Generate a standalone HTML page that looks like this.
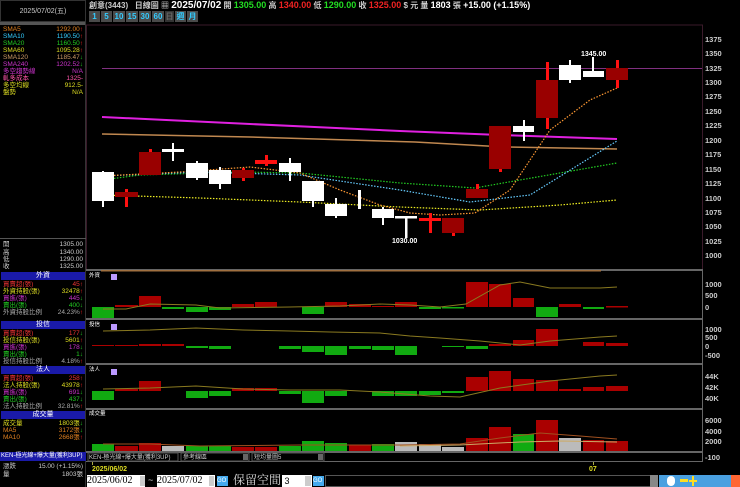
<!DOCTYPE html>
<html><head><meta charset="utf-8"><style>
*{margin:0;padding:0;box-sizing:border-box}
body{width:740px;height:487px;background:#000;overflow:hidden;position:relative;font-family:"Liberation Sans","Noto Sans CJK TC",sans-serif;color:#ccc}
.a{position:absolute;white-space:nowrap}
.r{position:absolute;left:3px;width:82px;height:7px;font-size:6.5px;line-height:7px}
.r span{position:absolute;right:2px}
.h{position:absolute;left:1px;width:84px;height:8px;background:#1a1aa8;color:#fff;font-size:7px;line-height:8px;text-align:center}
.btn{position:absolute;top:11px;height:11px;background:#4a4a4a;color:#3cf;font-size:8px;line-height:11px;text-align:center;font-weight:bold}
</style></head><body>
<!-- left panel -->
<div class="a" style="left:0;top:0;width:86px;height:22px;border:1px solid #333;font-size:7px;color:#ccc;line-height:22px;text-align:center">2025/07/02(五)</div>
<div class="a" style="left:0;top:22px;width:86px;height:3px;background:#555"></div>
<div class="a" style="left:85px;top:22px;width:1px;height:465px;background:#333"></div>
<div class="r" style="top:26px;color:#e08020">SMA5<span>1292.00<b style="color:#f22">↑</b></span></div>
<div class="r" style="top:33px;color:#3cf">SMA10<span>1190.50<b style="color:#f22">↑</b></span></div>
<div class="r" style="top:40px;color:#2c2">SMA20<span>1160.50<b style="color:#f22">↑</b></span></div>
<div class="r" style="top:47px;color:#dd2">SMA60<span>1095.28<b style="color:#f22">↑</b></span></div>
<div class="r" style="top:54px;color:#c96">SMA120<span>1185.47<b style="color:#2c2">↓</b></span></div>
<div class="r" style="top:61px;color:#c3c">SMA240<span>1202.52<b style="color:#2c2">↓</b></span></div>
<div class="r" style="top:68px;color:#c3c">多空趨勢線<span>N/A</span></div>
<div class="r" style="top:75px;color:#f5a">軋多成本<span>1325-</span></div>
<div class="r" style="top:82px;color:#dd2">多空均線<span>912.5-</span></div>
<div class="r" style="top:89px;color:#dd2">盤勢<span>N/A</span></div>
<div class="a" style="left:0;top:238px;width:86px;height:1px;background:#555"></div>
<div class="r" style="top:241px">開<span>1305.00</span></div>
<div class="r" style="top:249px">高<span>1340.00</span></div>
<div class="r" style="top:256px">低<span>1290.00</span></div>
<div class="r" style="top:263px">收<span>1325.00</span></div>
<div class="h" style="top:272px">外資</div>
<div class="r" style="top:281px;color:#e33">買賣超(張)<span>45<b>↑</b></span></div>
<div class="r" style="top:288px;color:#dd2">外資持股(張)<span>32478<b style="color:#f22">↑</b></span></div>
<div class="r" style="top:295px;color:#c3c">買進(張)<span>445<b style="color:#2c2">↓</b></span></div>
<div class="r" style="top:302px;color:#2c2">賣出(張)<span>400<b>↓</b></span></div>
<div class="r" style="top:309px;color:#aaa">外資持股比例<span>24.23%<b style="color:#f22">↑</b></span></div>
<div class="h" style="top:321px">投信</div>
<div class="r" style="top:330px;color:#e33">買賣超(張)<span>177<b style="color:#2c2">↓</b></span></div>
<div class="r" style="top:337px;color:#dd2">投信持股(張)<span>5601<b style="color:#f22">↑</b></span></div>
<div class="r" style="top:344px;color:#c3c">買進(張)<span>178<b style="color:#2c2">↓</b></span></div>
<div class="r" style="top:351px;color:#2c2">賣出(張)<span>1<b>↓</b></span></div>
<div class="r" style="top:358px;color:#aaa">投信持股比例<span>4.18%<b style="color:#f22">↑</b></span></div>
<div class="h" style="top:366px">法人</div>
<div class="r" style="top:375px;color:#e33">買賣超(張)<span>258<b>↑</b></span></div>
<div class="r" style="top:382px;color:#dd2">法人持股(張)<span>43978<b style="color:#f22">↑</b></span></div>
<div class="r" style="top:389px;color:#c3c">買進(張)<span>691<b style="color:#2c2">↓</b></span></div>
<div class="r" style="top:396px;color:#2c2">賣出(張)<span>437<b>↓</b></span></div>
<div class="r" style="top:403px;color:#aaa">法人持股比例<span>32.81%<b style="color:#f22">↑</b></span></div>
<div class="h" style="top:411px">成交量</div>
<div class="r" style="top:420px;color:#dd2">成交量<span>1803張<b style="color:#2c2">↓</b></span></div>
<div class="r" style="top:427px;color:#e08020">MA5<span>3172張<b style="color:#2c2">↓</b></span></div>
<div class="r" style="top:434px;color:#e08020">MA10<span>2668張<b style="color:#f22">↑</b></span></div>
<div class="a" style="left:0;top:452px;width:86px;height:9px;background:#1a1aa8;color:#fff;font-size:6px;line-height:9px;padding-left:1px">KEN-極光線+爆大量(獲利3UP)</div>
<div class="r" style="top:463px">漲跌<span>15.00 (+1.15%)</span></div>
<div class="r" style="top:471px">量<span>1803張</span></div>

<!-- header -->
<div class="a" style="left:89px;top:0;font-size:8px;line-height:11px;font-weight:bold;color:#ccc">創意(3443) &nbsp; 日線圖 ▦ <span style="font-size:10px;color:#fff">2025/07/02</span> 開 <span style="color:#2d2;font-size:9px">1305.00</span> 高 <span style="color:#e22;font-size:9px">1340.00</span> 低 <span style="color:#2d2;font-size:9px">1290.00</span> 收 <span style="color:#e22;font-size:9px">1325.00</span> $ 元 量 <span style="color:#fff;font-size:9px">1803</span> 張 <span style="color:#fff;font-size:9px">+15.00 (+1.15%)</span></div>
<div class="btn" style="left:89px;width:11px">1</div>
<div class="btn" style="left:101px;width:11px">5</div>
<div class="btn" style="left:113px;width:12px">10</div>
<div class="btn" style="left:126px;width:12px">15</div>
<div class="btn" style="left:139px;width:12px">30</div>
<div class="btn" style="left:152px;width:12px">60</div>
<div class="btn" style="left:165px;width:9px;background:#333;color:#666">日</div>
<div class="btn" style="left:175px;width:11px">週</div>
<div class="btn" style="left:187px;width:11px">月</div>

<svg class="a" style="left:0;top:0" width="740" height="487" font-family="Liberation Sans" font-size="7.5" font-weight="bold">
<rect x="86.5" y="25" width="616" height="245" fill="none" stroke="#3a1a2a"/>
<g fill="#ccc">
<text x="705" y="42">1375</text><text x="705" y="56">1350</text><text x="705" y="71">1325</text><text x="705" y="85">1300</text><text x="705" y="99">1275</text><text x="705" y="114">1250</text><text x="705" y="128">1225</text><text x="705" y="143">1200</text><text x="705" y="157">1175</text><text x="705" y="172">1150</text><text x="705" y="186">1125</text><text x="705" y="201">1100</text><text x="705" y="215">1075</text><text x="705" y="229">1050</text><text x="705" y="244">1025</text><text x="705" y="258">1000</text>
</g>
<line x1="102" y1="68.5" x2="702" y2="68.5" stroke="#803080" stroke-width="1"/>
<polyline points="102,117 250,124 400,131 500,135 617,139" fill="none" stroke="#e020e0" stroke-width="2"/>
<polyline points="102,134 250,137 415,142 505,147 617,149" fill="none" stroke="#c08850" stroke-width="1.5"/>
<g fill="none" stroke-width="1.2" stroke-dasharray="1.5 1.5">
<polyline points="102,180 140,175 240,172 300,173 400,183 475,188 520,180 617,163" stroke="#2c2"/>
<polyline points="102,176 200,172 300,175 400,190 470,202 530,195 617,141" stroke="#6cf"/>
<polyline points="102,195 200,198 300,202 400,207 480,210 560,205 617,200" stroke="#ee2"/>
<polyline points="102,176 180,172 250,167 300,173 340,190 380,205 410,213 440,215 475,213 510,190 550,130 590,100 617,88" stroke="#f93"/>
</g>
<!-- candles -->
<g fill="#fff">
<rect x="102" y="171" width="2" height="36"/><rect x="92" y="172" width="22" height="29"/>
<rect x="172" y="143" width="2" height="18"/><rect x="162" y="149" width="22" height="3"/>
<rect x="196" y="161" width="2" height="19"/><rect x="186" y="163" width="22" height="15"/>
<rect x="219" y="167" width="2" height="22"/><rect x="209" y="170" width="22" height="14"/>
<rect x="289" y="158" width="2" height="23"/><rect x="279" y="163" width="22" height="9"/>
<rect x="312" y="181" width="2" height="26"/><rect x="302" y="181" width="22" height="20"/>
<rect x="335" y="198" width="2" height="20"/><rect x="325" y="204" width="22" height="12"/>
<rect x="358" y="190" width="3" height="19"/>
<rect x="382" y="207" width="2" height="18"/><rect x="372" y="209" width="22" height="9"/>
<rect x="405" y="216" width="2.5" height="22"/><rect x="395" y="216" width="22" height="2.5"/>
<rect x="523" y="120" width="2" height="21"/><rect x="513" y="126" width="21" height="6"/>
<rect x="569" y="60" width="2" height="23"/><rect x="559" y="65" width="22" height="15"/>
<rect x="592" y="57" width="2" height="17"/><rect x="583" y="71" width="21" height="6"/>
</g>
<g fill="#f11">
<rect x="125" y="189" width="3" height="18"/><rect x="149" y="149" width="3" height="5"/>
<rect x="265" y="155" width="3" height="11"/><rect x="242" y="168" width="3" height="13"/>
<rect x="429" y="213" width="3" height="20"/><rect x="452" y="230" width="3" height="6"/>
<rect x="476" y="184" width="3" height="6"/><rect x="499" y="165" width="3" height="7"/>
<rect x="546" y="62" width="3" height="67"/><rect x="616" y="60" width="3" height="28"/>
<rect x="255" y="160" width="22" height="4"/><rect x="419" y="218" width="22" height="3"/>
</g>
<g fill="#900">
<rect x="115" y="192" width="23" height="5"/><rect x="139" y="152" width="22" height="23"/>
<rect x="232" y="170" width="22" height="8"/>
<rect x="442" y="218" width="22" height="15"/><rect x="466" y="189" width="22" height="9"/>
<rect x="489" y="126" width="22" height="43"/><rect x="536" y="80" width="22" height="38"/>
<rect x="606" y="68" width="22" height="12"/>
</g>
<g font-size="7" fill="#fff"><text x="392" y="243">1030.00</text><text x="581" y="56">1345.00</text></g>

<!-- panel separators -->
<g fill="#666"><rect x="86" y="269" width="617" height="2"/><rect x="86" y="318" width="617" height="2"/><rect x="86" y="363" width="617" height="2"/><rect x="86" y="408" width="617" height="2"/><rect x="86" y="451" width="617" height="2"/><rect x="86" y="461" width="617" height="1"/></g>
<rect x="702" y="270" width="1" height="192" fill="#666"/>
<rect x="101" y="270" width="500" height="1.5" fill="#a07040"/>
<g fill="#fff" font-size="5.5" font-weight="normal"><text x="89" y="277">外資</text><text x="89" y="326">投信</text><text x="89" y="371">法人</text><text x="89" y="415">成交量</text></g>
<g fill="#b9f"><rect x="111" y="274" width="6" height="6"/><rect x="111" y="324" width="6" height="6"/><rect x="111" y="369" width="6" height="6"/></g>
<g fill="#ccc"><text x="705" y="287">1000</text><text x="705" y="298">500</text><text x="705" y="310">0</text>
<text x="705" y="332">1000</text><text x="705" y="340">500</text><text x="705" y="349">0</text><text x="705" y="358">-500</text>
<text x="705" y="379">44K</text><text x="705" y="390">42K</text><text x="705" y="401">40K</text>
<text x="705" y="423">6000</text><text x="705" y="434">4000</text><text x="705" y="444">2000</text><text x="705" y="460">-100</text></g>
<!-- panel 1 -->
<g fill="#1a1">
<rect x="92" y="307" width="22" height="11"/><rect x="162" y="307" width="22" height="2"/><rect x="186" y="307" width="22" height="5"/><rect x="209" y="307" width="22" height="3"/><rect x="302" y="307" width="22" height="7"/><rect x="419" y="307" width="22" height="2"/><rect x="442" y="307" width="22" height="1.5"/><rect x="536" y="307" width="22" height="10"/><rect x="583" y="307" width="21" height="2"/>
<rect x="186" y="346" width="22" height="2"/><rect x="209" y="346" width="22" height="3"/><rect x="279" y="346" width="22" height="3"/><rect x="302" y="346" width="22" height="6"/><rect x="325" y="346" width="22" height="9"/><rect x="349" y="346" width="22" height="3"/><rect x="372" y="346" width="22" height="4"/><rect x="395" y="346" width="22" height="9"/><rect x="442" y="346" width="22" height="1"/><rect x="466" y="346" width="22" height="3"/>
<rect x="92" y="391" width="22" height="9"/><rect x="186" y="391" width="22" height="7"/><rect x="209" y="391" width="22" height="5"/><rect x="279" y="391" width="22" height="3"/><rect x="302" y="391" width="22" height="12"/><rect x="325" y="391" width="22" height="5"/><rect x="372" y="391" width="22" height="5"/><rect x="395" y="391" width="22" height="5"/><rect x="419" y="391" width="22" height="4"/><rect x="442" y="391" width="22" height="2"/>
<rect x="92" y="444" width="22" height="7"/><rect x="186" y="446" width="22" height="5"/><rect x="209" y="446" width="22" height="5"/><rect x="279" y="446" width="22" height="5"/><rect x="302" y="441" width="22" height="10"/><rect x="325" y="443" width="22" height="8"/><rect x="372" y="444" width="22" height="7"/><rect x="513" y="434" width="21" height="17"/>
</g>
<g fill="#a00">
<rect x="115" y="305" width="23" height="2"/><rect x="139" y="296" width="22" height="11"/><rect x="232" y="304" width="22" height="3"/><rect x="255" y="302" width="22" height="5"/><rect x="325" y="302" width="22" height="5"/><rect x="349" y="304" width="22" height="3"/><rect x="372" y="306" width="22" height="1"/><rect x="395" y="302" width="22" height="5"/><rect x="466" y="282" width="22" height="25"/><rect x="489" y="284" width="22" height="23"/><rect x="513" y="298" width="21" height="9"/><rect x="559" y="304" width="22" height="3"/><rect x="606" y="306" width="22" height="1.5"/>
<rect x="92" y="345" width="22" height="1"/><rect x="115" y="345" width="23" height="1"/><rect x="139" y="344" width="22" height="2"/><rect x="162" y="344" width="22" height="2"/><rect x="489" y="344" width="22" height="2"/><rect x="513" y="340" width="21" height="6"/><rect x="536" y="329" width="22" height="17"/><rect x="583" y="342" width="21" height="4"/><rect x="606" y="343" width="22" height="3"/>
<rect x="115" y="389" width="23" height="2"/><rect x="139" y="381" width="22" height="10"/><rect x="232" y="388" width="22" height="3"/><rect x="255" y="388" width="22" height="3"/><rect x="466" y="377" width="22" height="14"/><rect x="489" y="371" width="22" height="20"/><rect x="513" y="379" width="21" height="12"/><rect x="536" y="380" width="22" height="11"/><rect x="559" y="389" width="22" height="2"/><rect x="583" y="387" width="21" height="4"/><rect x="606" y="386" width="22" height="5"/>
<rect x="115" y="446" width="23" height="5"/><rect x="139" y="443" width="22" height="8"/><rect x="232" y="447" width="22" height="4"/><rect x="255" y="447" width="22" height="4"/><rect x="349" y="445" width="22" height="6"/><rect x="466" y="438" width="22" height="13"/><rect x="489" y="427" width="22" height="24"/><rect x="536" y="420" width="22" height="31"/><rect x="583" y="440" width="21" height="11"/><rect x="606" y="441" width="22" height="10"/>
</g>
<g fill="#bbb"><rect x="162" y="446" width="22" height="5"/><rect x="395" y="442" width="22" height="9"/><rect x="419" y="444" width="22" height="7"/><rect x="442" y="447" width="22" height="4"/><rect x="559" y="438" width="22" height="13"/></g>
<g fill="none" stroke-width="1">
<polyline points="103,309 126,309 150,304 196,305 220,308 290,307 340,306 380,304 410,305 440,307 466,304 500,285 520,282 550,288 600,288 617,287" stroke="#8a7a20"/>
<polyline points="103,331 150,330 196,328 243,330 290,331 330,332 380,333 410,336 440,338 480,341 520,345 550,341 600,337 617,336" stroke="#8a7a20"/>
<polyline points="103,389 150,388 196,386 243,389 290,390 340,390 380,392 430,396 460,397 500,388 550,381 600,376 617,375" stroke="#8a7a20"/>
<polyline points="103,444 150,444 200,446 300,445 400,445 460,444 500,438 540,433 580,436 617,439" stroke="#a05020"/>
<polyline points="400,446 460,445 520,442 560,441 617,442" stroke="#ca6"/>
</g>
<!-- bottom strip -->
<g font-size="6" font-weight="normal">
<rect x="88" y="453" width="90" height="8" fill="#000" stroke="#555"/><text x="89" y="459" fill="#ccc">KEN-極光線+爆大量(獲利3UP)</text>
<rect x="181" y="453" width="68" height="8" fill="#000" stroke="#555"/><text x="183" y="459" fill="#ccc">參考線區</text><rect x="243" y="454" width="5" height="6" fill="#666"/>
<rect x="252" y="453" width="72" height="8" fill="#000" stroke="#555"/><text x="254" y="459" fill="#ccc">短均量圖5</text><rect x="318" y="454" width="5" height="6" fill="#666"/>
</g>
<rect x="92" y="462" width="1" height="3" fill="#aa4"/><rect x="593" y="462" width="1" height="3" fill="#aa4"/>
<text x="92" y="471" fill="#dd2" font-size="7">2025/06/02</text><text x="589" y="471" fill="#dd2" font-size="7">07</text>
</svg>

<!-- toolbar -->
<div class="a" style="left:87px;top:475px;width:58px;height:12px;background:#fff;color:#000;font-size:10px;line-height:12px;font-family:'Liberation Serif',serif">2025/06/02</div>
<div class="a" style="left:140px;top:476px;width:5px;height:10px;background:#ccc"></div>
<div class="a" style="left:148px;top:475px;font-size:9px;color:#ccc">~</div>
<div class="a" style="left:157px;top:475px;width:58px;height:12px;background:#fff;color:#000;font-size:10px;line-height:12px;font-family:'Liberation Serif',serif">2025/07/02</div>
<div class="a" style="left:209px;top:476px;width:5px;height:10px;background:#ccc"></div>
<div class="a" style="left:217px;top:476px;width:11px;height:10px;background:#4ae;color:#fff;font-size:6px;line-height:10px">GO</div>
<div class="a" style="left:233px;top:473px;font-size:12px;color:#ddd;font-family:'Liberation Serif','Noto Serif CJK SC',serif;line-height:14px">保留空間</div>
<div class="a" style="left:282px;top:475px;width:30px;height:12px;background:#fff;color:#000;font-size:9px;line-height:12px">&nbsp;3</div>
<div class="a" style="left:305px;top:476px;width:6px;height:10px;background:#ccc"></div>
<div class="a" style="left:313px;top:476px;width:11px;height:10px;background:#4ae;color:#fff;font-size:6px;line-height:10px">GO</div>
<div class="a" style="left:325px;top:475px;width:330px;height:12px;border:1px solid #555;background:#000"></div>
<div class="a" style="left:650px;top:475px;width:8px;height:12px;background:#888"></div>
<div class="a" style="left:659px;top:475px;width:81px;height:12px;background:#4aa0e0"></div>
<div class="a" style="left:667px;top:476px;width:8px;height:10px;border-radius:5px;background:#fff"></div>
<div class="a" style="left:680px;top:479px;width:8px;height:3px;background:#fd2"></div>
<div class="a" style="left:692px;top:476px;width:2px;height:10px;background:#fd2"></div><div class="a" style="left:689px;top:480px;width:8px;height:2px;background:#fd2"></div>
<div class="a" style="left:731px;top:475px;width:9px;height:12px;background:#f63"></div>
</body></html>
